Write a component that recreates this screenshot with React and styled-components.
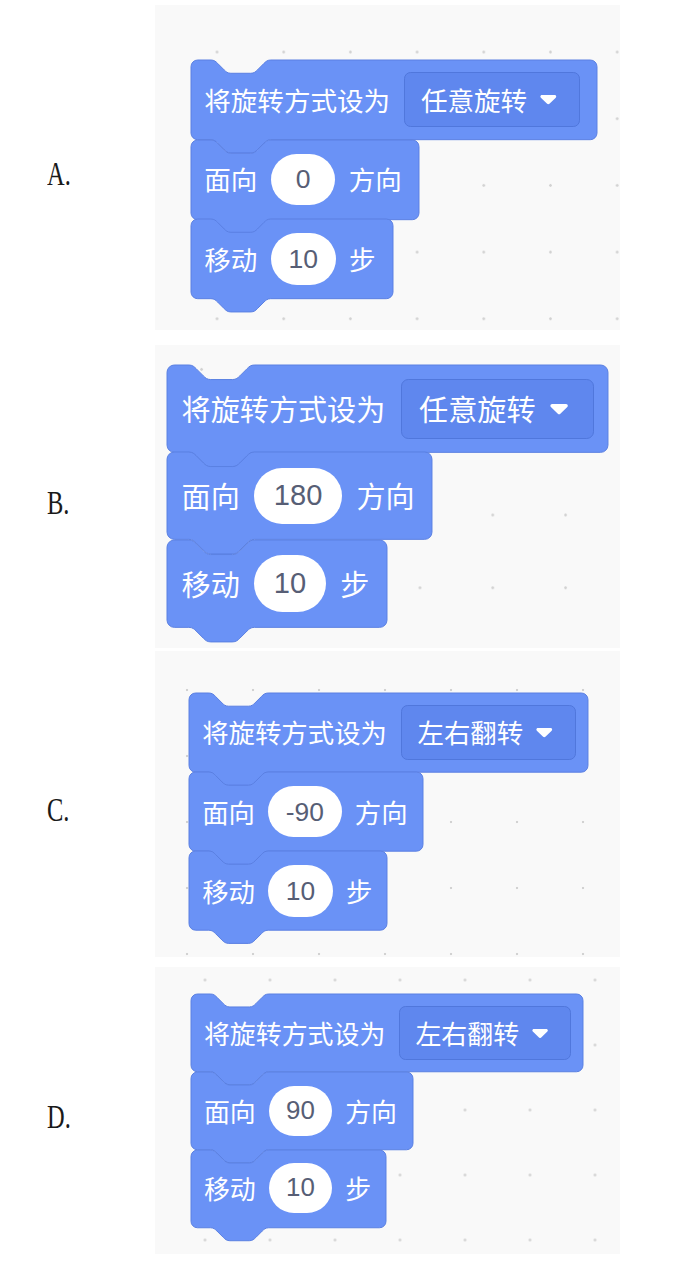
import React from "react"
import styled, { createGlobalStyle } from "styled-components"

const GlobalStyle = createGlobalStyle`
  html, body {
    margin: 0;
    padding: 0;
    background: #ffffff;
  }
  body {
    width: 677px;
    height: 1268px;
    overflow: hidden;
  }
`

// scratch units -> px, scaled per panel
const u = (n) => (p) => `${(n * p.$s).toFixed(2)}px`

const Page = styled.div`
  display: flex;
  flex-direction: column;
  padding-top: 5px;
`

const Row = styled.div`
  display: flex;
  align-items: center;
  margin-top: ${(p) => p.$gap}px;
`

const LabelCell = styled.div`
  width: 155px;
  box-sizing: border-box;
  padding-left: 47px;
  padding-top: 12px;
`

const Letter = styled.span`
  display: inline-block;
  font-family: "Liberation Serif", serif;
  font-size: 34px;
  line-height: 1;
  color: #1a1a1a;
  transform: scaleX(0.72);
  transform-origin: left center;
`

const Panel = styled.div`
  width: 465px;
  height: ${(p) => p.$h}px;
  box-sizing: border-box;
  padding: ${(p) => p.$top}px 0 0 ${(p) => p.$left}px;
  display: flex;
  flex-direction: column;
  align-items: flex-start;
  background-color: #f9f9f9;
  background-image: radial-gradient(circle, #d2d2d2 1px, transparent 1.6px);
  background-size: ${(p) => p.$grid}px ${(p) => p.$grid}px;
  background-position: ${(p) => p.$gx}px ${(p) => p.$gy}px;
`

const BlockBox = styled.div`
  position: relative;
  isolation: isolate;
  width: ${(p) => p.$w}px;
  height: ${u(48)};
  box-sizing: border-box;
  padding-left: ${u(8)};
  display: flex;
  align-items: center;
  gap: ${u(8)};
  font-family: "Noto Sans CJK SC", "Noto Sans", sans-serif;
  font-size: ${u(16)};
  line-height: 1;
  color: #ffffff;
  white-space: nowrap;
`

const Shape = styled.svg`
  position: absolute;
  left: 0;
  top: 0;
  z-index: -1;
  overflow: visible;
`

const Dropdown = styled.div`
  width: ${u(106)};
  height: ${u(33)};
  box-sizing: border-box;
  margin-left: ${u(0.5)};
  padding-left: ${u(9.5)};
  display: flex;
  align-items: center;
  gap: ${u(8)};
  background: #5f87ee;
  border: 1px solid #5077dc;
  border-radius: ${u(4)};
`

const Oval = styled.div`
  height: ${u(31)};
  min-width: ${u(39)};
  padding: 0 ${u(10.7)};
  box-sizing: border-box;
  border-radius: ${u(16)};
  background: #ffffff;
  display: flex;
  align-items: center;
  justify-content: center;
  font-family: "Liberation Sans", sans-serif;
  font-size: ${u(16)};
  color: #575e75;
`

const blockPath = (W, H) =>
  `M0,4 A4,4 0 0 1 4,0 H12 c2,0 3,1 4,2 l4,4 c1,1 2,2 4,2 h12 c2,0 3,-1 4,-2 l4,-4 c1,-1 2,-2 4,-2 ` +
  `H${W - 4} A4,4 0 0 1 ${W},4 V${H - 4} A4,4 0 0 1 ${W - 4},${H} ` +
  `H48 c-2,0 -3,1 -4,2 l-4,4 c-1,1 -2,2 -4,2 h-12 c-2,0 -3,-1 -4,-2 l-4,-4 c-1,-1 -2,-2 -4,-2 ` +
  `H4 A4,4 0 0 1 0,${H - 4} Z`

const Block = ({ s, w, children }) => {
  const W = w / s
  return (
    <BlockBox $s={s} $w={w}>
      <Shape width={w} height={56 * s} viewBox={`0 0 ${W} 56`}>
        <path
          d={blockPath(W, 48)}
          fill="#6a92f6"
          stroke="#5a80e2"
          strokeWidth="1"
          vectorEffect="non-scaling-stroke"
        />
      </Shape>
      {children}
    </BlockBox>
  )
}

const Arrow = ({ s }) => (
  <svg width={10 * s} height={6.5 * s} viewBox="0 0 10 6.5">
    <path
      d="M1.2,0.6 H8.8 C9.7,0.6 10.1,1.5 9.5,2.2 L5.7,5.9 C5.3,6.3 4.7,6.3 4.3,5.9 L0.5,2.2 C-0.1,1.5 0.3,0.6 1.2,0.6 Z"
      fill="#ffffff"
    />
  </svg>
)

const panels = [
  { label: "A.", gap: 0, h: 325, s: 1.66, left: 36, top: 55, grid: 66.7, gx: 28.7, gy: 13.7, mode: "任意旋转", dir: "0", w: [406, 228, 202] },
  { label: "B.", gap: 15, h: 303, s: 1.82, left: 12, top: 20, grid: 72.8, gx: 10.2, gy: -12, mode: "任意旋转", dir: "180", w: [441, 265, 220] },
  { label: "C.", gap: 3, h: 306, s: 1.65, left: 34, top: 42, grid: 66, gx: -1, gy: 6, mode: "左右翻转", dir: "-90", w: [399, 234, 198] },
  { label: "D.", gap: 10, h: 287, s: 1.62, left: 36, top: 27, grid: 65, gx: 17.5, gy: -19.5, mode: "左右翻转", dir: "90", w: [392, 222, 195] },
]

const App = () => {
  return (
    <>
      <GlobalStyle />
      <Page>
        {panels.map((p) => (
          <Row key={p.label} $gap={p.gap}>
            <LabelCell>
              <Letter>{p.label}</Letter>
            </LabelCell>
            <Panel $h={p.h} $top={p.top} $left={p.left} $grid={p.grid} $gx={p.gx} $gy={p.gy}>
              <Block s={p.s} w={p.w[0]}>
                <span>将旋转方式设为</span>
                <Dropdown $s={p.s}>
                  <span>{p.mode}</span>
                  <Arrow s={p.s} />
                </Dropdown>
              </Block>
              <Block s={p.s} w={p.w[1]}>
                <span>面向</span>
                <Oval $s={p.s}>{p.dir}</Oval>
                <span>方向</span>
              </Block>
              <Block s={p.s} w={p.w[2]}>
                <span>移动</span>
                <Oval $s={p.s}>10</Oval>
                <span>步</span>
              </Block>
            </Panel>
          </Row>
        ))}
      </Page>
    </>
  )
}

export default App
